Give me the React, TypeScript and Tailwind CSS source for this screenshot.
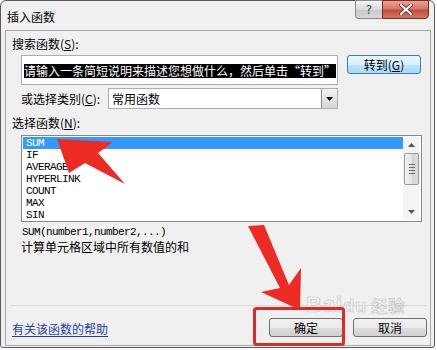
import React from "react";

const cjk = { fontFamily: '"Noto Sans CJK SC", "Noto Sans", sans-serif' };
const mono = { fontFamily: '"Liberation Mono", "Noto Sans CJK SC", monospace' };

const items = ["SUM", "IF", "AVERAGE", "HYPERLINK", "COUNT", "MAX", "SIN"];

function WinButton({ children, focused }: { children: React.ReactNode; focused?: boolean }) {
  return (
    <div
      className={
        "w-[74px] h-[19px] rounded-[3px] border flex items-center justify-center text-[12px] leading-[14px] text-black " +
        (focused
          ? "border-[#3c7fb1] bg-[linear-gradient(#eaf6fd_0%,#d9f0fc_50%,#bee6fd_51%,#a7d9f5_100%)]"
          : "border-[#707070] bg-[linear-gradient(#f2f2f2_0%,#ebebeb_50%,#dddddd_51%,#cfcfcf_100%)]")
      }
      style={cjk}
    >
      {children}
    </div>
  );
}

export default function App() {
  return (
    <div className="w-[437px] h-[350px] bg-white relative overflow-hidden" style={cjk}>
      <div className="w-[435px] h-[348px] border border-[#5a5a5a] rounded-t-[6px] rounded-b-[3px] bg-[#f0f0f0] flex flex-col">
        {/* title bar */}
        <div className="h-[29px] flex items-start justify-between">
          <div className="pl-[6px] pt-[9px] text-[12px] leading-[14px] text-black">插入函数</div>
          <div className="flex mr-[5px] -mt-px">
            <div className="w-[27px] h-[19px] rounded-bl-[4px] border border-[#8a8a8a] border-r-0 bg-[linear-gradient(#f4f4f4,#dadada_50%,#c8c8c8_51%,#d8d8d8)] flex items-center justify-center text-[12px] leading-none text-[#444]" style={{ fontFamily: '"DejaVu Sans", sans-serif' }}>
              ?
            </div>
            <div className="w-[47px] h-[19px] rounded-br-[4px] border border-[#7a2a2a] bg-[linear-gradient(#e8a493,#d67763_45%,#c14e3a_55%,#d27a63)] flex items-center justify-center">
              <svg width="14" height="11" viewBox="0 0 14 11">
                <path d="M2 1 L12 10 M12 1 L2 10" stroke="#5a1a10" strokeWidth="3.6" strokeLinecap="square" />
                <path d="M2 1 L12 10 M12 1 L2 10" stroke="#ffffff" strokeWidth="2.2" strokeLinecap="square" />
              </svg>
            </div>
          </div>
        </div>

        {/* panel */}
        <div className="ml-[4px] w-[426px] h-[316px] border border-[#a9a9a9] bg-[#f0f0f0] flex flex-col">
          <div className="pl-[6px] mt-[6px] text-[12px] leading-[14px] text-black">
            搜索函数(<span className="underline">S</span>):
          </div>
          <div className="flex mt-[4px] ml-[15px]">
            <div className="w-[317px] h-[30px] bg-white border border-[#abadb3] pl-[2px] pt-[1px]">
              <span className="bg-black text-white text-[12px] leading-[14px] inline-block whitespace-nowrap">
                请输入一条简短说明来描述您想做什么，然后单击“转到”
              </span>
            </div>
            <div className="ml-[9px]">
              <WinButton focused>
                转到(<span className="underline">G</span>)
              </WinButton>
            </div>
          </div>
          <div className="flex items-center mt-[3px] ml-[15px] h-[21px]">
            <div className="w-[87px] text-[12px] leading-[14px] text-black">
              或选择类别(<span className="underline">C</span>):
            </div>
            <div className="w-[230px] h-[21px] bg-white border border-[#abadb3] flex items-center justify-between">
              <span className="pl-[3px] text-[12px] leading-[14px] text-black">常用函数</span>
              <div className="w-[16px] h-[19px] border-l border-[#8d8d8d] bg-[linear-gradient(#f2f2f2,#d6d6d6)] flex items-center justify-center">
                <svg width="7" height="4" viewBox="0 0 7 4">
                  <path d="M0 0 H7 L3.5 4 Z" fill="#111" />
                </svg>
              </div>
            </div>
          </div>
          <div className="pl-[6px] mt-[7px] text-[12px] leading-[14px] text-black">
            选择函数(<span className="underline">N</span>):
          </div>
          <div className="ml-[15px] mt-[5px] w-[401px] h-[87px] bg-white border border-[#828790] flex p-px">
            <div className="flex-1 flex flex-col">
              {items.map((it, i) => (
                <div
                  key={it}
                  className={
                    "h-[12px] leading-[12px] text-[11px] tracking-[-0.6px] pl-[3px] " +
                    (i === 0 ? "bg-[#3399ff] text-white" : "text-black")
                  }
                  style={mono}
                >
                  {it}
                </div>
              ))}
            </div>
            <div className="w-[17px] h-full bg-[#f4f4f4] flex flex-col items-center">
              <div className="h-[16px] flex items-center justify-center">
                <svg width="7" height="4" viewBox="0 0 7 4">
                  <path d="M0 4 H7 L3.5 0 Z" fill="#555" />
                </svg>
              </div>
              <div className="w-[15px] h-[32px] rounded-[2px] border border-[#9b9b9b] bg-[linear-gradient(90deg,#f3f3f3,#e3e3e3_50%,#d4d4d4_51%,#dcdcdc)] flex flex-col items-center justify-center gap-[2px]">
                <div className="w-[6px] h-px bg-[#6a6a6a]" />
                <div className="w-[6px] h-px bg-[#6a6a6a]" />
                <div className="w-[6px] h-px bg-[#6a6a6a]" />
                <div className="w-[6px] h-px bg-[#6a6a6a]" />
              </div>
              <div className="flex-1" />
              <div className="h-[16px] flex items-center justify-center">
                <svg width="7" height="4" viewBox="0 0 7 4">
                  <path d="M0 0 H7 L3.5 4 Z" fill="#555" />
                </svg>
              </div>
            </div>
          </div>
          <div className="ml-[16px] mt-[4px] h-[12px] leading-[12px] text-[11px] tracking-[-0.6px] text-black" style={mono}>
            SUM(number1,number2,...)
          </div>
          <div className="ml-[15px] mt-[2px] text-[12px] leading-[14px] text-black">计算单元格区域中所有数值的和</div>
          <div className="mt-[51px] h-px bg-[#dcdcdc] mx-[4px]" />
          <div className="flex items-start mt-[12px] h-[19px]">
            <div className="pl-[6px] pt-[4px] text-[12px] leading-[14px] text-[#1c3fa8] underline underline-offset-2">
              有关该函数的帮助
            </div>
            <div className="flex-1" />
            <WinButton>确定</WinButton>
            <div className="w-[10px]" />
            <WinButton>取消</WinButton>
            <div className="w-[3px]" />
          </div>
        </div>
      </div>

      {/* watermark */}
      <div className="absolute left-[306px] top-[294px] text-[22px] leading-none font-bold text-[#f4f4f4] opacity-90 tracking-[1px]" style={{ fontFamily: '"Liberation Sans", "Noto Sans CJK SC", sans-serif', WebkitTextStroke: "0.7px #c4c4c4" }}>
        Bai<span className="text-[18px]">du</span><span className="text-[16px] ml-[4px]">经验</span>
      </div>

      {/* annotation overlay */}
      <svg className="absolute left-0 top-0 pointer-events-none" width="437" height="350" viewBox="0 0 437 350">
        <polygon points="57,139 113,142 98,153 125,184 85,163 69,173" fill="#ee2a24" />
        <polygon points="248,226 264,225 289,285 301,268 300,310 261,292 280,288" fill="#ee2a24" />
        <rect x="254.5" y="308.5" width="89" height="36" rx="2" fill="none" stroke="#e0282a" strokeWidth="3" />
      </svg>
    </div>
  );
}
